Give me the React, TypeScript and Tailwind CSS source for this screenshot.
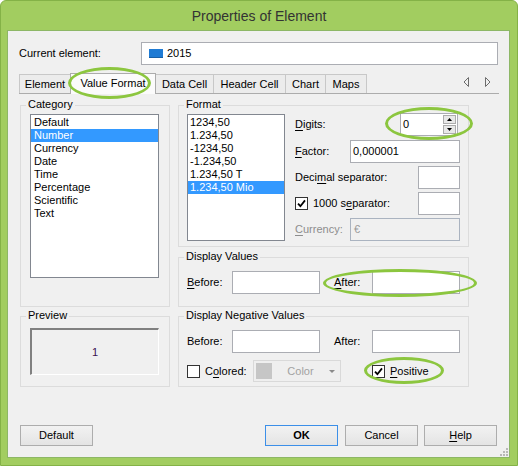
import React from "react";

const U = ({ c }: { c: string }) => (
  <span className="underline underline-offset-[2px] decoration-[1px]">{c}</span>
);

function Group({
  label,
  className,
  children,
}: {
  label: string;
  className: string;
  children?: React.ReactNode;
}) {
  return (
    <div className={"relative border border-[#dcdcdc] " + className}>
      <span className="absolute left-[5px] top-[-8px] px-[2px] bg-[#f0f0f0] leading-[13px] whitespace-nowrap">
        {label}
      </span>
      {children}
    </div>
  );
}

const Check = ({ checked }: { checked?: boolean }) => (
  <span className="w-[13px] h-[13px] border border-[#333333] bg-white flex items-center justify-center shrink-0">
    {checked && (
      <svg width="9" height="9" viewBox="0 0 9 9">
        <path d="M1 4.6 L3.4 7.2 L8 1.4" stroke="#000" strokeWidth="1.8" fill="none" />
      </svg>
    )}
  </span>
);

const categories = ["Default", "Number", "Currency", "Date", "Time", "Percentage", "Scientific", "Text"];
const formats = ["1234,50", "1.234,50", "-1234,50", "-1.234,50", "1.234,50 T", "1.234,50 Mio"];

export default function App() {
  return (
    <div className="w-[518px] h-[466px] bg-[#a2cd60] border border-[#84b247] rounded-t-[6px] flex flex-col font-['Liberation_Sans',Arial,sans-serif] text-[11px] text-black leading-[13px]">
      <div className="h-[29px] flex items-center justify-center text-[14px] text-[#333333] pt-[1px]">
        Properties of Element
      </div>
      <div className="ml-[6px] w-[503px] h-[428px] border border-[#8db766] bg-[#f0f0f0] relative flex flex-col">
        {/* current element */}
        <div className="flex items-center mt-[11px] h-[23px]">
          <span className="w-[133px] pl-[11px]">Current element:</span>
          <div className="w-[357px] h-[23px] border border-[#abadb3] bg-white flex items-center pl-[7px]">
            <span className="w-[14px] h-[9px] bg-[#1f7bd4] border-b border-[#185fa5]" />
            <span className="ml-[4px]">2015</span>
          </div>
        </div>

        {/* tabs */}
        <div className="mt-[8px] ml-[11px] w-[480px] h-[21px] border-b border-[#acacac] flex items-end">
          <div className="w-[51px] h-[19px] border-l border-t border-[#c8c8c8] bg-[#ececec] flex items-center justify-center">Element</div>
          <div className="w-[86px] h-[21px] -mb-px border-l border-t border-r border-[#acacac] bg-[#fbfbfb] flex items-center justify-center relative z-10 pb-[1px]">Value Format</div>
          <div className="w-[57px] h-[19px] border-t border-[#c8c8c8] bg-[#ececec] flex items-center justify-center">Data Cell</div>
          <div className="w-[72px] h-[19px] border-l border-t border-[#c8c8c8] bg-[#ececec] flex items-center justify-center">Header Cell</div>
          <div className="w-[40px] h-[19px] border-l border-t border-[#c8c8c8] bg-[#ececec] flex items-center justify-center">Chart</div>
          <div className="w-[42px] h-[19px] border-l border-t border-r border-[#c8c8c8] bg-[#ececec] flex items-center justify-center">Maps</div>
          <div className="ml-auto mr-[8px] mb-[6px] flex items-center gap-[14px]">
            <svg width="7" height="10" viewBox="0 0 7 10">
              <path d="M5.5 0.5 L1 5 L5.5 9.5 Z" fill="none" stroke="#6d6d6d" strokeWidth="1" />
            </svg>
            <svg width="7" height="10" viewBox="0 0 7 10">
              <path d="M1.5 0.5 L6 5 L1.5 9.5 Z" fill="none" stroke="#6d6d6d" strokeWidth="1" />
            </svg>
          </div>
        </div>

        {/* groups */}
        <div className="mt-[11px] pl-[12px] flex gap-[8px]">
          <div className="w-[150px] flex flex-col">
            <Group label="Category" className="h-[202px]">
              <div className="ml-[9px] mt-[8px] w-[129px] h-[164px] border border-[#828790] bg-white pt-[1px]">
                {categories.map((c) => (
                  <div
                    key={c}
                    className={
                      c === "Number"
                        ? "h-[13px] leading-[13px] pl-[3px] bg-[#3399ff] text-white"
                        : "h-[13px] leading-[13px] pl-[3px]"
                    }
                  >
                    {c}
                  </div>
                ))}
              </div>
            </Group>
            <Group label="Preview" className="mt-[9px] h-[71px]">
              <div className="ml-[9px] mt-[11px] w-[129px] h-[47px] border-t-2 border-l-2 border-r border-b border-t-[#808080] border-l-[#808080] border-r-white border-b-white flex items-center justify-center text-[#3a1050]">
                1
              </div>
            </Group>
          </div>

          <div className="w-[291px] flex flex-col">
            <Group label="Format" className="h-[142px]">
              <div className="flex pl-[8px] pt-[8px]">
                <div className="w-[98px] h-[127px] border border-[#828790] bg-white pt-[1px]">
                  {formats.map((f) => (
                    <div
                      key={f}
                      className={
                        f === "1.234,50 Mio"
                          ? "h-[13px] leading-[13px] pl-[2px] bg-[#3399ff] text-white"
                          : "h-[13px] leading-[13px] pl-[2px]"
                      }
                    >
                      {f}
                    </div>
                  ))}
                </div>
                <div className="ml-[10px] w-[165px] flex flex-col -mt-px">
                  <div className="flex items-center h-[23px]">
                    <span>
                      <U c="D" />igits:
                    </span>
                    <div className="ml-auto mr-[2px] w-[58px] h-[23px] border border-[#abadb3] bg-white flex">
                      <span className="pl-[2px] self-center">0</span>
                      <div className="ml-auto mr-px mt-px flex flex-col gap-px">
                        <div className="w-[13px] h-[9px] border border-[#acacac] bg-[#e8e8e8] flex items-center justify-center">
                          <svg width="5" height="3" viewBox="0 0 5 3"><path d="M0 3 L2.5 0 L5 3 Z" fill="#000" /></svg>
                        </div>
                        <div className="w-[13px] h-[9px] border border-[#acacac] bg-[#e8e8e8] flex items-center justify-center">
                          <svg width="5" height="3" viewBox="0 0 5 3"><path d="M0 0 L2.5 3 L5 0 Z" fill="#000" /></svg>
                        </div>
                      </div>
                    </div>
                  </div>
                  <div className="flex items-center h-[23px] mt-[4px]">
                    <span>
                      <U c="F" />actor:
                    </span>
                    <div className="ml-auto w-[110px] h-[23px] border border-[#abadb3] bg-white flex items-center pl-[2px]">0,000001</div>
                  </div>
                  <div className="flex items-center h-[23px] mt-[3px]">
                    <span>
                      Deci<U c="m" />al separator:
                    </span>
                    <div className="ml-auto w-[42px] h-[23px] border border-[#abadb3] bg-white" />
                  </div>
                  <div className="flex items-center h-[23px] mt-[3px]">
                    <Check checked />
                    <span className="ml-[5px]">
                      1000 s<U c="e" />parator:
                    </span>
                    <div className="ml-auto w-[42px] h-[23px] border border-[#abadb3] bg-white" />
                  </div>
                  <div className="flex items-center h-[23px] mt-[3px] text-[#8d8d8d]">
                    <span>
                      <U c="C" />urrency:
                    </span>
                    <div className="ml-auto w-[110px] h-[23px] border border-[#aab3c0] bg-[#f0f0f0] flex items-center pl-[3px] text-[#9a9a9a]">€</div>
                  </div>
                </div>
              </div>
            </Group>

            <Group label="Display Values" className="mt-[10px] h-[50px]">
              <div className="flex items-center pl-[8px] pt-[13px]">
                <span className="w-[45px]">
                  <U c="B" />efore:
                </span>
                <div className="w-[88px] h-[23px] border border-[#abadb3] bg-white" />
                <span className="ml-[14px] w-[38px]">
                  <U c="A" />fter:
                </span>
                <div className="w-[88px] h-[23px] border border-[#abadb3] bg-white" />
              </div>
            </Group>

            <Group label="Display Negative Values" className="mt-[9px] h-[71px]">
              <div className="flex items-center pl-[8px] pt-[13px]">
                <span className="w-[45px]">Before:</span>
                <div className="w-[88px] h-[23px] border border-[#abadb3] bg-white" />
                <span className="ml-[14px] w-[38px]">After:</span>
                <div className="w-[88px] h-[23px] border border-[#abadb3] bg-white" />
              </div>
              <div className="flex items-center pl-[8px] mt-[7px] h-[22px]">
                <Check />
                <span className="ml-[5px] w-[48px]">
                  C<U c="o" />lored:
                </span>
                <div className="w-[88px] h-[22px] border border-[#d9d9d9] bg-[#efefef] flex items-center pl-[2px] pr-[5px]">
                  <span className="w-[16px] h-[16px] bg-[#c6c6c6]" />
                  <span className="flex-1 text-center text-[#a2a2a2]">Color</span>
                  <svg width="6" height="3" viewBox="0 0 6 3"><path d="M0 0 L3 3 L6 0 Z" fill="#8a8a8a" /></svg>
                </div>
                <span className="ml-[31px]">
                  <Check checked />
                </span>
                <span className="ml-[5px]">
                  <U c="P" />ositive
                </span>
              </div>
            </Group>
          </div>
        </div>

        {/* buttons */}
        <div className="mt-[38px] pl-[12px] flex">
          <div className="w-[73px] h-[21px] border border-[#adadad] bg-linear-to-b from-[#f2f2f2] to-[#e4e4e4] flex items-center justify-center">Default</div>
          <div className="ml-[172px] w-[73px] h-[21px] border border-[#3c8fe8] bg-linear-to-b from-[#f2f2f2] to-[#e4e4e4] flex items-center justify-center font-bold">OK</div>
          <div className="ml-[7px] w-[73px] h-[21px] border border-[#adadad] bg-linear-to-b from-[#f2f2f2] to-[#e4e4e4] flex items-center justify-center">Cancel</div>
          <div className="ml-[6px] w-[73px] h-[21px] border border-[#adadad] bg-linear-to-b from-[#f2f2f2] to-[#e4e4e4] flex items-center justify-center">
            <span>
              <U c="H" />elp
            </span>
          </div>
        </div>

        {/* resize grip */}
        <svg className="absolute left-[492px] top-[417px]" width="9" height="9" viewBox="0 0 9 9">
          <rect x="6" y="0" width="2" height="2" fill="#b8b8b8" />
          <rect x="3" y="3" width="2" height="2" fill="#b8b8b8" />
          <rect x="6" y="3" width="2" height="2" fill="#b8b8b8" />
          <rect x="0" y="6" width="2" height="2" fill="#b8b8b8" />
          <rect x="3" y="6" width="2" height="2" fill="#b8b8b8" />
          <rect x="6" y="6" width="2" height="2" fill="#b8b8b8" />
        </svg>

        {/* highlight ellipses */}
        <div className="absolute left-[60px] top-[36px] w-[83px] h-[32px] rounded-[50%] border-[3px] border-[#8cc63f] z-20" />
        <div className="absolute left-[377px] top-[76px] w-[88px] h-[33px] rounded-[50%] border-[3px] border-[#8cc63f] z-20" />
        <div className="absolute left-[315px] top-[238px] w-[154px] h-[28px] rounded-[50%] border-[3px] border-[#8cc63f] z-20" />
        <div className="absolute left-[356px] top-[326px] w-[80px] h-[27px] rounded-[50%] border-[3px] border-[#8cc63f] z-20" />
      </div>
    </div>
  );
}
